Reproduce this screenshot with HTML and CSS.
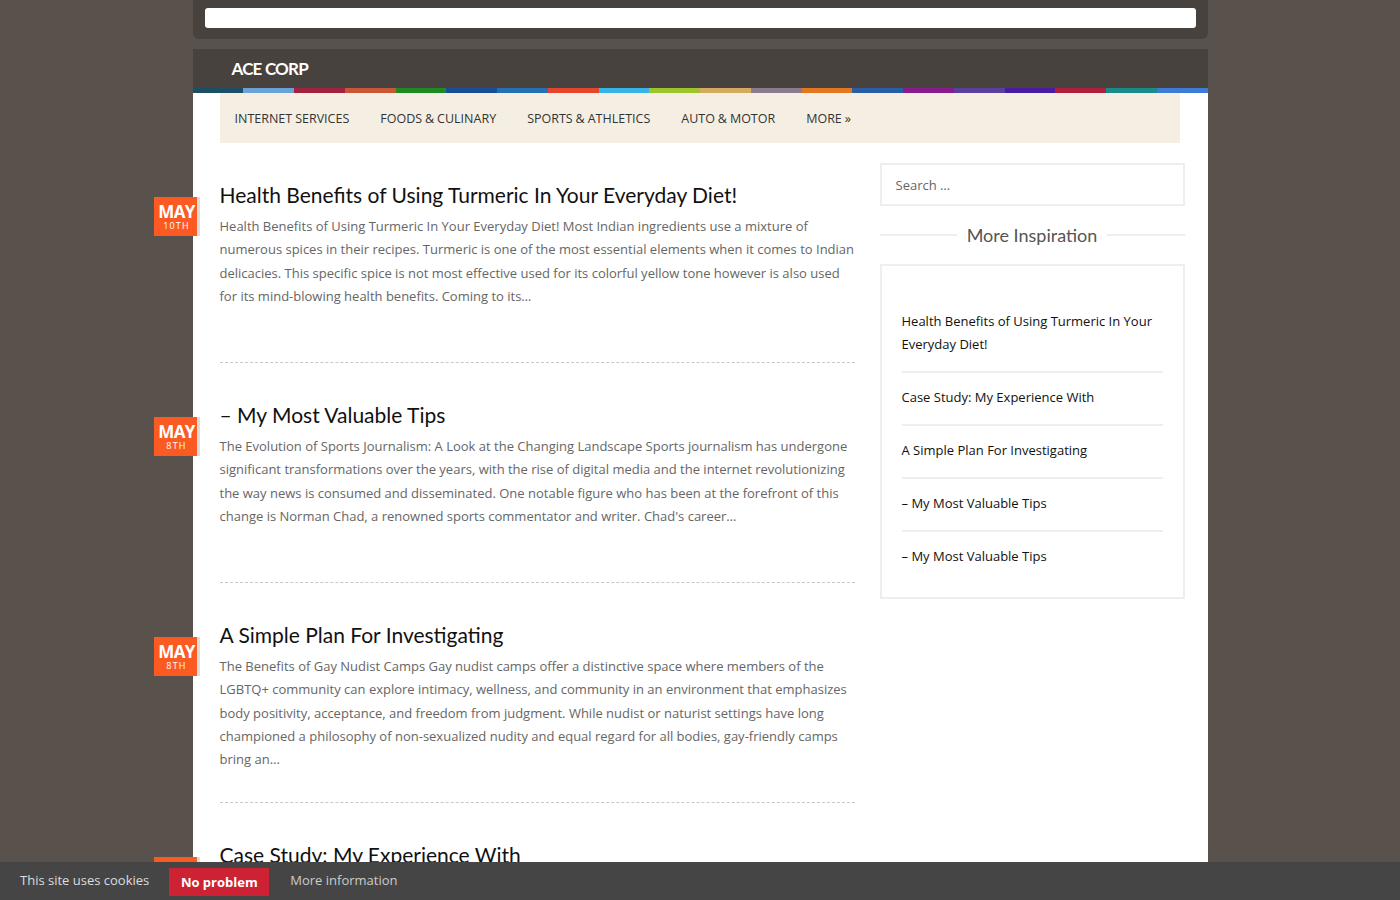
FILE: index.html
```html
<!DOCTYPE html>
<html lang="en">
<head>
  <meta charset="UTF-8">
  <meta name="viewport" content="width=device-width, initial-scale=1.0">
  <title>ACE CORP</title>
  <link rel="stylesheet" href="styles.css">
</head>
<body>
  <div class="wrap">
    <div class="topbar">
      <div class="topbar-field"></div>
    </div>

    <header class="site-header">
      <div class="logo">ACE CORP</div>
      <div class="stripe">
        <span style="background:#1c4e66"></span>
        <span style="background:#6ba2d6"></span>
        <span style="background:#a1213f"></span>
        <span style="background:#c95634"></span>
        <span style="background:#1f8a22"></span>
        <span style="background:#1b4d97"></span>
        <span style="background:#2470b3"></span>
        <span style="background:#e4452b"></span>
        <span style="background:#38b3e6"></span>
        <span style="background:#9cc42b"></span>
        <span style="background:#d3aa5e"></span>
        <span style="background:#8c7b8d"></span>
        <span style="background:#e4761f"></span>
        <span style="background:#2b5da4"></span>
        <span style="background:#8b1b8d"></span>
        <span style="background:#5c3f9c"></span>
        <span style="background:#4a1ca6"></span>
        <span style="background:#ad1f3b"></span>
        <span style="background:#1b8a8b"></span>
        <span style="background:#3c7bd6"></span>
      </div>
    </header>

    <div class="page">
      <nav class="nav">
        <a href="#">Internet Services</a>
        <a href="#">Foods &amp; Culinary</a>
        <a href="#">Sports &amp; Athletics</a>
        <a href="#">Auto &amp; Motor</a>
        <a href="#">More &raquo;</a>
      </nav>

      <div class="layout">
        <main class="posts">
          <article class="post">
            <div class="date"><span class="month">MAY</span><span class="day">10TH</span></div>
            <h2>Health Benefits of Using Turmeric In Your Everyday Diet!</h2>
            <p>Health Benefits of Using Turmeric In Your Everyday Diet! Most Indian ingredients use a mixture of numerous spices in their recipes. Turmeric is one of the most essential elements when it comes to Indian delicacies. This specific spice is not most effective used for its colorful yellow tone however is also used for its mind-blowing health benefits. Coming to its&hellip;</p>
          </article>

          <article class="post">
            <div class="date"><span class="month">MAY</span><span class="day">8TH</span></div>
            <h2>&ndash; My Most Valuable Tips</h2>
            <p>The Evolution of Sports Journalism: A Look at the Changing Landscape Sports journalism has undergone significant transformations over the years, with the rise of digital media and the internet revolutionizing the way news is consumed and disseminated. One notable figure who has been at the forefront of this change is Norman Chad, a renowned sports commentator and writer. Chad's career&hellip;</p>
          </article>

          <article class="post">
            <div class="date"><span class="month">MAY</span><span class="day">8TH</span></div>
            <h2>A Simple Plan For Investigating</h2>
            <p>The Benefits of Gay Nudist Camps Gay nudist camps offer a distinctive space where members of the LGBTQ+ community can explore intimacy, wellness, and community in an environment that emphasizes body positivity, acceptance, and freedom from judgment. While nudist or naturist settings have long championed a philosophy of non-sexualized nudity and equal regard for all bodies, gay-friendly camps bring an&hellip;</p>
          </article>

          <article class="post">
            <div class="date"><span class="month">MAY</span><span class="day">8TH</span></div>
            <h2>Case Study: My Experience With</h2>
            <p>Case Study: My Experience With the everyday things that make a difference.</p>
          </article>
        </main>

        <aside class="sidebar">
          <div class="search">Search &hellip;</div>
          <h3 class="widget-title"><span>More Inspiration</span></h3>
          <ul class="widget">
            <li><a href="#">Health Benefits of Using Turmeric In Your Everyday Diet!</a></li>
            <li><a href="#">Case Study: My Experience With</a></li>
            <li><a href="#">A Simple Plan For Investigating</a></li>
            <li><a href="#">&ndash; My Most Valuable Tips</a></li>
            <li><a href="#">&ndash; My Most Valuable Tips</a></li>
          </ul>
        </aside>
      </div>
    </div>
  </div>

  <div class="cookies">
    <span>This site uses cookies</span>
    <button type="button">No problem</button>
    <a href="#">More information</a>
  </div>
</body>
</html>
```

FILE: styles.css
```css
body {
  margin: 0;
  background-color: #58514c;
  font-family: "Open Sans", Arial, sans-serif;
  color: #666;
}

a {
  text-decoration: none;
  color: inherit;
}

.wrap {
  width: 1015px;
  margin: 0 auto;
}

.topbar {
  background-color: #48423e;
  height: 39px;
  border-radius: 0 0 6px 6px;
  padding: 8px 12px 0;
  box-sizing: border-box;
}

.topbar-field {
  background-color: #fff;
  height: 20px;
  border-radius: 3px;
}

.site-header {
  margin-top: 10px;
  background-color: #48423e;
}

.logo {
  height: 39px;
  padding-left: 39px;
  display: flex;
  align-items: center;
  color: #fff;
  font-family: Lato, Arial, sans-serif;
  font-weight: 700;
  font-size: 17px;
  letter-spacing: -0.8px;
}

.stripe {
  display: flex;
  height: 5px;
}

.stripe span {
  flex: 1;
}

.page {
  background-color: #fff;
  padding: 0 23px 0 27px;
  min-height: 820px;
}

.nav {
  background-color: #f5efe3;
  height: 50px;
  margin-right: 5px;
  display: flex;
  align-items: center;
  padding-left: 15px;
  gap: 31px;
}

.nav a {
  font-size: 12.5px;
  text-transform: uppercase;
  word-spacing: -0.3px;
  color: #333;
}

.layout {
  display: flex;
  gap: 25px;
  padding-top: 20px;
}

.posts {
  width: 635px;
}

.post {
  position: relative;
  height: 200px;
  border-bottom: 1px dashed #c8c8c8;
  padding-top: 17px;
  box-sizing: border-box;
}

.post:not(:first-child) {
  height: 220px;
  padding-top: 37px;
}

.date {
  position: absolute;
  left: -66px;
  top: 34px;
  width: 43px;
  height: 39px;
  padding-left: 3px;
  box-sizing: border-box;
  background-color: #fb5a23;
  box-shadow: 3px 0 0 #ddd;
  color: #fff;
  display: flex;
  flex-direction: column;
  align-items: center;
  justify-content: center;
}

.post:not(:first-child) .date {
  top: 54px;
}

.date .month {
  font-size: 17px;
  font-weight: 700;
  line-height: 17px;
  letter-spacing: -0.6px;
}

.date .day {
  font-size: 9px;
  letter-spacing: 1.2px;
  line-height: 11px;
}

.post h2 {
  margin: 0 0 5px;
  font-family: Lato, Arial, sans-serif;
  font-weight: 400;
  font-size: 21px;
  line-height: 30px;
  color: #111;
}

.post p {
  margin: 0;
  font-size: 13px;
  line-height: 23.3px;
  color: #666;
}

.sidebar {
  width: 305px;
}

.search {
  height: 43px;
  border: 2px solid #eee;
  box-sizing: border-box;
  padding-left: 14px;
  display: flex;
  align-items: center;
  font-size: 13px;
  color: #666;
}

.widget-title {
  display: flex;
  align-items: center;
  gap: 10px;
  margin: 16px 0 16px;
  font-family: Lato, Arial, sans-serif;
  font-weight: 400;
  font-size: 18px;
  color: #555;
  line-height: 26px;
}

.widget-title::before,
.widget-title::after {
  content: "";
  flex: 1;
  height: 2px;
  background-color: #eee;
}

.widget {
  list-style: none;
  margin: 0;
  border: 2px solid #eee;
  padding: 37px 20px 14px;
}

.widget li {
  font-size: 13px;
  line-height: 23px;
  color: #111;
  padding: 7px 0 7px;
  border-bottom: 2px solid #eee;
}

.widget li + li {
  padding-top: 13px;
  padding-bottom: 15px;
}

.widget li:first-child {
  padding-bottom: 15px;
}

.widget li:last-child {
  border-bottom: none;
}

.cookies {
  position: fixed;
  left: 0;
  right: 0;
  bottom: 0;
  height: 38px;
  background-color: #454545;
  display: flex;
  align-items: center;
  padding-left: 20px;
  font-size: 13px;
  color: #ddd;
}

.cookies span,
.cookies a {
  margin-top: -2px;
}

.cookies button {
  margin-left: 20px;
  height: 28px;
  width: 100px;
  border: none;
  background-color: #cc2233;
  color: #fff;
  font-family: "Open Sans", Arial, sans-serif;
  font-weight: 700;
  font-size: 13px;
  margin-top: 2px;
}

.cookies a {
  margin-left: 21px;
  color: #ccc;
}
```
